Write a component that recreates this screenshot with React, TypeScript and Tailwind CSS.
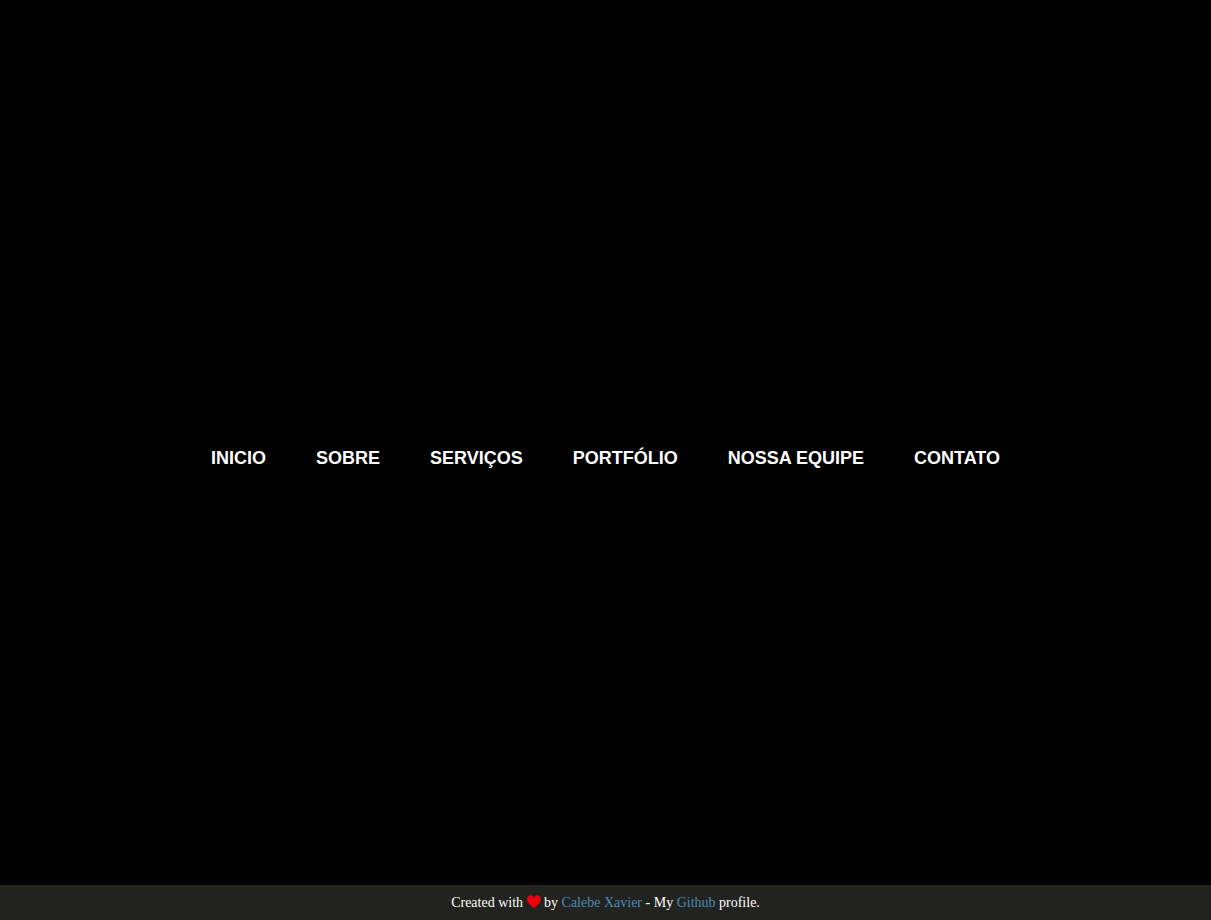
const links = ["Inicio", "Sobre", "Serviços", "Portfólio", "Nossa Equipe", "Contato"];

function Heart() {
  return (
    <svg
      viewBox="0 0 14 14"
      fill="currentColor"
      role="img"
      aria-label="love"
      className="inline size-3.5 align-[-2px] text-[#eb0010]"
    >
      <path d="M7 13.300L1.200 7.900Q0 6.500 0 4.300Q0 2.500 1.100 1.400L2 .7Q3 .2 4.200 .3Q5.900 .6 7 2.400Q8.100 .6 9.800 .3Q11 .2 12 .7L12.900 1.400Q14 2.500 14 4.300Q14 6.500 12.800 7.900Z" />
    </svg>
  );
}

export default function App() {
  return (
    <div className="flex min-h-screen flex-col bg-black text-white">
      <main className="flex grow items-center justify-center pt-[30px]">
        <nav>
          <ul className="flex flex-wrap justify-center gap-[50px] font-['Liberation_Sans',Arial,sans-serif] text-lg leading-5 font-bold uppercase">
            {links.map((label) => (
              <li key={label}>
                <a href="#">{label}</a>
              </li>
            ))}
          </ul>
        </nav>
      </main>
      <footer className="bg-[#22221e] px-4 py-2 text-center font-['Liberation_Serif','Times_New_Roman',serif] text-sm leading-[19px]">
        Created with <Heart /> by{" "}
        <a href="#" className="text-[#4a8db7]">Calebe Xavier</a> - My{" "}
        <a href="#" className="text-[#4a8db7]">Github</a> profile.
      </footer>
    </div>
  );
}
